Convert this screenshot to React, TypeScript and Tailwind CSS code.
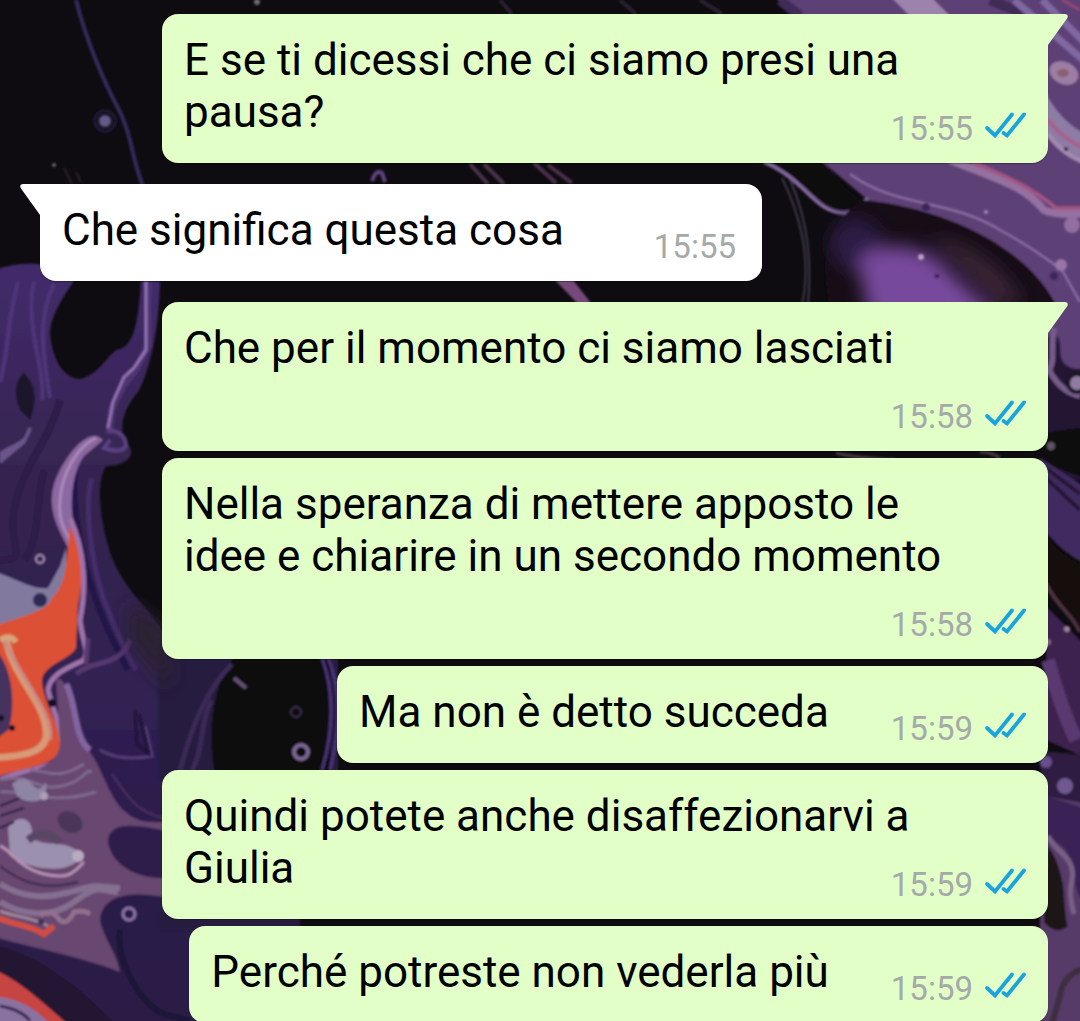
import clsx from 'clsx';

type Message = {
  id: number;
  text: string;
  time: string;
  mine: boolean;
  first?: boolean;
};

const messages: Message[] = [
  { id: 1, text: 'E se ti dicessi che ci siamo presi una pausa?', time: '15:55', mine: true, first: true },
  { id: 2, text: 'Che significa questa cosa', time: '15:55', mine: false, first: true },
  { id: 3, text: 'Che per il momento ci siamo lasciati', time: '15:58', mine: true, first: true },
  { id: 4, text: 'Nella speranza di mettere apposto le\nidee e chiarire in un secondo momento', time: '15:58', mine: true },
  { id: 5, text: 'Ma non è detto succeda', time: '15:59', mine: true },
  { id: 6, text: 'Quindi potete anche disaffezionarvi a Giulia', time: '15:59', mine: true },
  { id: 7, text: 'Perché potreste non vederla più', time: '15:59', mine: true },
];

function Wallpaper() {
  return (
    <svg
      className="absolute inset-0 h-full w-full"
      viewBox="0 0 1080 1021"
      preserveAspectRatio="xMidYMid slice"
      fill="none"
      aria-hidden="true"
    >
      <defs>
        <filter id="soft" x="-20%" y="-20%" width="140%" height="140%">
          <feGaussianBlur stdDeviation="1.3" />
        </filter>
        <filter id="smoke" x="-50%" y="-50%" width="200%" height="200%">
          <feGaussianBlur stdDeviation="9" />
        </filter>
        <linearGradient id="left" x1="0" y1="260" x2="0" y2="1021" gradientUnits="userSpaceOnUse">
          <stop offset="0" stopColor="#432b6c" />
          <stop offset=".3" stopColor="#35244f" />
          <stop offset=".6" stopColor="#302052" />
          <stop offset="1" stopColor="#2a1b45" />
        </linearGradient>
      </defs>
      <rect width="1080" height="1021" fill="#0e0c10" />

      {/* top left */}
      <g filter="url(#soft)">
        <path d="M76 0C86 40 104 82 118 108S132 160 143 186" stroke="#352b5c" strokeWidth="4" />
        <circle cx="105" cy="121" r="6" fill="#625a8b" />
        <circle cx="105" cy="121" r="10" stroke="#1d1730" strokeWidth="4" />
        <circle cx="54" cy="165" r="2" fill="#666" />
        <path d="M64 168l8 16M76 172l5 10" stroke="#2c2228" strokeWidth="2" />
        <circle cx="257" cy="2" r="3" fill="#6f6b74" />
        <path d="M372 181q4-12 10-8l3 9" stroke="#604585" strokeWidth="4" />
        <path d="M470 164l18 20M484 164l20 20M534 163l22 20M548 165l24 18" stroke="#4c304d" strokeWidth="4" />
        <path d="M555 280l22 23h14l-18-23z" fill="#764a7c" />
        <path d="M500 0l12 14M620 0l16 14M700 0l22 14" stroke="#2b2030" strokeWidth="4" />
      </g>

      {/* left column of paint */}
      <g filter="url(#soft)">
        <path
          d="M-10 272C20 258 62 262 74 281C62 298 50 318 50 334C53 362 64 378 80 379C99 374 104 360 116 350C132 348 138 330 141 281H160C159 330 150 370 138 392C124 408 116 430 128 444C138 458 122 466 106 466C94 485 102 530 112 558C125 590 150 610 163 632H200V1040H-10Z"
          fill="url(#left)"
        />
        <path d="M18 282C6 325 10 345 0 382M34 282C24 325 46 370 42 400M54 284C36 320 44 360 50 398" stroke="#4f3679" strokeWidth="4" />
        <path d="M24 372q-14 14-4 38l10 10q8-20 2-36z" fill="#1a122b" />
        <path d="M0 454C12 444 26 446 30 428L24 442Q12 452 0 462" fill="#6a578c" stroke="#6a578c" strokeWidth="3" />
        <path d="M60 400C50 440 20 470 14 510S30 560 0 560M44 470C36 500 40 540 24 560" stroke="#2d1f49" strokeWidth="8" />
        <path d="M148 281V346L136 369L124 384L112 408L109 434" stroke="#563c7c" strokeWidth="7" opacity=".7" />
        <path d="M146 281V350L134 368L124 377L113 402L108 428" stroke="#9a78b8" strokeWidth="2.5" />
        <path d="M108 430Q126 432 126 446Q122 454 104 448L110 440" stroke="#5b4182" strokeWidth="4" />
        <path d="M84 446C68 468 76 520 82 550S100 620 128 670" stroke="#23154a" strokeWidth="6" />
        <path d="M92 478C84 500 90 560 104 600C116 630 124 650 136 670" stroke="#452d6b" strokeWidth="5" />
        <path d="M103 440C88 424 62 460 54 484C47 510 58 528 68 548L78 545C68 515 70 475 84 456Z" fill="#8a68a0" />
        <path d="M96 438C78 446 62 472 60 500S68 530 72 548" stroke="#ab89b9" strokeWidth="3" />

        <path d="M-10 570C20 580 32 590 48 588L60 566L66 548L68 600L40 615L-10 628Z" fill="#81799e" />
        <path
          d="M70 526C82 548 85 570 78 605L76 648C70 660 44 664 42 680C42 700 62 730 62 746C56 770 18 766 -10 780V628C20 616 48 612 52 598C68 582 66 560 70 526Z"
          fill="#dc5134"
        />
        <path d="M70 518C86 552 86 590 80 620C82 642 90 650 84 660C68 668 50 674 48 690C52 710 66 735 62 754C58 770 16 770 0 780" stroke="#9f73aa" strokeWidth="5" />
        <path d="M-10 646C14 660 16 710 8 730L-10 744Z" fill="#45325f" />
        <path d="M6 640C14 680 50 706 46 738C42 754 20 756 -6 758" stroke="#d89a77" strokeWidth="7" />
        <path d="M4 640C22 680 56 716 50 740" stroke="#c7898a" strokeWidth="3" />
        <path d="M0 640q10-6 16 2" stroke="#d6a57a" strokeWidth="6" />
        <circle cx="40" cy="600" r="7" fill="#2d2a55" />
        <circle cx="40" cy="559" r="4" stroke="#a48eaf" strokeWidth="2" />
        <circle cx="52" cy="703" r="4" fill="#180f27" />
        <circle cx="12" cy="728" r="3" fill="#180f27" />
        <circle cx="1" cy="718" r="3" fill="#180f27" />

        <path
          d="M56 680C68 672 74 720 88 750C102 765 108 800 128 814C142 824 150 822 170 822V832C138 824 108 820 108 842C112 866 138 880 170 878V898C130 890 102 895 100 920C104 940 116 950 120 972C84 958 42 950 -10 936V782C30 774 62 766 60 740Z"
          fill="#67476f"
        />
        <path d="M66 684C76 700 74 740 90 750" stroke="#8265a0" strokeWidth="6" />
        <path d="M100 750Q120 762 152 756L145 726" stroke="#523d73" strokeWidth="3" />
        <path d="M76 674C90 660 120 668 130 640M86 664l2-26" stroke="#56396f" strokeWidth="5" />
        <path d="M112 774C132 804 140 812 163 818" stroke="#49325f" strokeWidth="2" />

        {/* pale swirls */}
        <path d="M0 780C30 772 36 792 62 786S84 768 92 772M0 792C30 790 50 806 96 792M30 770C52 772 58 780 84 764" stroke="#80698d" strokeWidth="3" />
        <path d="M12 784q12-10 20 0t14-2q2 14-6 18t-22-2z" fill="#8e84a3" />
        <path d="M8 828C18 812 34 818 32 836C40 850 68 836 82 856C70 876 30 870 10 856Z" fill="#9b90ae" />
        <path d="M28 840Q44 828 60 842" stroke="#594662" strokeWidth="8" />
        <ellipse cx="70" cy="822" rx="13" ry="10" fill="#4c3659" transform="rotate(30 70 822)" />
        <circle cx="78" cy="856" r="6" fill="#b8aac2" />
        <circle cx="44" cy="796" r="4" fill="#ae9fb8" />
        <path d="M0 806l20-8M0 816l24-8M0 828l14-6" stroke="#2b1d40" strokeWidth="2" />
        <path d="M0 846C12 850 18 868 44 874S74 872 84 862" stroke="#b590b2" strokeWidth="3" />
        <path d="M0 866C18 880 40 892 78 882" stroke="#392647" strokeWidth="2" />
        <path d="M0 884C20 896 40 900 70 892S92 886 120 888M0 902C20 914 50 920 74 902S98 890 118 892" stroke="#857091" strokeWidth="6" />
        <path d="M40 916q10-8 18 2t16-6q10-2 16 2" stroke="#93708f" strokeWidth="5" />
        <path d="M-4 917C16 926 28 924 44 934L54 926" stroke="#d34e42" strokeWidth="6" />
        <path d="M0 911C18 918 30 916 48 926" stroke="#a28799" strokeWidth="3" />
        <circle cx="129" cy="914" r="6" stroke="#8b74a7" strokeWidth="3" />
        <circle cx="41" cy="922" r="3" fill="#403052" />

        {/* bottom edge */}
        <path d="M-10 944C32 952 76 980 130 1040H60L-10 980Z" fill="#211333" />
        <path d="M-10 968C20 980 40 1000 80 1035H48L-10 995Z" fill="#c64542" />
        <path d="M-10 996C24 998 40 1012 60 1035H-10Z" fill="#8a72a0" />
        <path d="M0 1006Q22 1010 30 1021" stroke="#33234b" strokeWidth="3" />
        <path d="M120 930C116 956 134 990 150 1005S176 1014 189 1021" stroke="#1f1238" strokeWidth="6" />
      </g>

      {/* middle strip between the bubbles */}
      <g filter="url(#soft)">
        <path d="M158 640H338V780H158Z" fill="#261a40" />
        <path d="M216 780C206 730 212 680 240 650H330V780Z" fill="#0d0a10" />
        <path d="M180 770C192 726 206 690 232 664M192 770C204 750 200 720 212 700" stroke="#3b2a55" strokeWidth="5" />
        <path d="M322 658C334 690 334 730 322 770M328 658C342 690 340 730 330 770" stroke="#4c367a" strokeWidth="3" />
        <path d="M234 678l12 10" stroke="#655377" strokeWidth="4" />
        <circle cx="301" cy="752" r="7" stroke="#7b6894" strokeWidth="4" />
        <circle cx="296" cy="712" r="5" stroke="#3b2f4a" strokeWidth="2" />
        <path d="M139 714l10 40-12-10-2-34" stroke="#19102e" strokeWidth="2" />
        <path d="M158 910H300V930H158Z" fill="#281a41" />
      </g>
      <g filter="url(#smoke)">
        <path d="M130 600L170 630V690L128 640Z" fill="#2c2232" />
      </g>

      {/* top right */}
      <g filter="url(#soft)">
        <path d="M770 -10H1100V470L1045 440V330L1030 302C1010 260 966 224 868 200L820 160L870 140L790 14Z" fill="#5d4076" />
        <path d="M780 0l20 16M990 0l40 16" stroke="#3f2956" strokeWidth="10" />
        <path d="M890 -4L910 16H950L930 -4Z" fill="#9b83ac" />
        <path d="M1014 0L1090 66M1042 0L1090 48" stroke="#8067a0" strokeWidth="7" />
        <path d="M1062 0L1080 10" stroke="#95466f" strokeWidth="3" />
        <ellipse cx="1064" cy="73" rx="15" ry="11" fill="#9e7da4" transform="rotate(25 1064 73)" />
        <ellipse cx="1063" cy="73" rx="6" ry="4" fill="#8a606f" />
        <path d="M1046 94C1056 112 1070 128 1090 136V162C1064 154 1052 142 1046 136Z" fill="#8d7ca4" />
        <path d="M1048 120Q1064 140 1084 148" stroke="#a7618a" strokeWidth="4" />
        <path d="M1048 134Q1062 154 1084 162" stroke="#a58bb0" strokeWidth="4" />
        <circle cx="1066" cy="149" r="2" fill="#2b162e" />

        <path d="M820 160C838 176 848 198 868 200C850 216 834 214 800 184L764 160Z" fill="#100a10" />
        <path d="M764 162C806 180 814 212 844 213C858 212 862 204 868 198" stroke="#80669c" strokeWidth="4" />
        <path d="M782 178C800 214 812 260 802 304M790 180C808 220 812 260 808 304" stroke="#3f3748" strokeWidth="2" />
        <path d="M862 200C950 208 1034 252 1058 310H830C822 260 820 230 862 200Z" fill="#171019" />
      </g>
      <g filter="url(#smoke)">
        <ellipse cx="856" cy="244" rx="26" ry="26" fill="#2a1d45" />
        <path d="M858 262C880 236 926 246 944 266S990 306 1000 320H870Z" fill="#774a9c" />
        <path d="M930 236C960 240 1000 262 1024 304H1000Z" fill="#3c2838" />
      </g>
      <g filter="url(#soft)">
        <path d="M950 160C1000 180 1024 186 1044 210Q1056 216 1090 213" stroke="#9471a0" strokeWidth="8" />
        <path d="M972 162C1012 178 1034 190 1056 208H1090" stroke="#a25582" strokeWidth="4" />
        <circle cx="1072" cy="225" r="8" fill="#936ea0" />
        <path d="M850 174C896 208 948 198 1000 230C1030 246 1054 264 1062 270L1080 302" stroke="#8a6da0" strokeWidth="2.5" />
        <circle cx="1061" cy="265" r="6" fill="#9876aa" />
        <circle cx="926" cy="207" r="4" fill="#39265c" />
        <circle cx="1054" cy="276" r="4" fill="#3c255a" />
        <circle cx="921" cy="257" r="3" fill="#bda0c5" />
        <circle cx="986" cy="212" r="2" fill="#a88bb2" />
        <circle cx="937" cy="276" r="2" fill="#35214c" />
      </g>

      {/* right edge */}
      <g filter="url(#soft)">
        <path d="M1044 340Q1060 326 1060 350T1090 368V480H1036Z" fill="#241632" />
        <path d="M1048 368Q1060 392 1080 396M1054 328C1050 350 1056 360 1048 372" stroke="#765b89" strokeWidth="6" />
        <circle cx="1077" cy="383" r="9" fill="#907ca2" stroke="#1d1227" strokeWidth="4" />
        <path d="M1036 434L1090 426V480L1036 460Z" fill="#100d10" />
        <circle cx="1051" cy="446" r="4" fill="#5d5560" />
        <path d="M1040 458L1090 490V566C1060 552 1052 538 1040 526Z" fill="#412b61" />
        <path d="M1046 468L1080 494M1046 478L1080 510" stroke="#251635" strokeWidth="4" />
        <path d="M1046 536Q1060 556 1090 570V634L1046 590Z" fill="#12100f" />
        <path d="M1046 584C1058 608 1072 614 1080 632" stroke="#4d3240" strokeWidth="4" />
        <path d="M1046 606L1090 650V760L1046 740Z" fill="#3c2450" />
        <path d="M1048 660Q1060 706 1076 740" stroke="#5a3970" strokeWidth="14" />
        <circle cx="1067" cy="629" r="3" fill="#9d829f" />
        <circle cx="1048" cy="642" r="3" fill="#806481" />
        <path d="M1036 750L1090 756V810H1050Z" fill="#2d1b42" />
        <circle cx="1046" cy="762" r="6" fill="#68508b" />
        <circle cx="1065" cy="786" r="8" fill="#6f588f" />
        <path d="M1044 796L1090 804V1040H1036Z" fill="#563b68" />
        <path d="M1046 796L1090 810V910C1068 890 1076 860 1064 848L1046 834Z" fill="#3b2457" />
        <path d="M1048 846Q1062 866 1064 896T1068 926Q1056 936 1044 922Z" fill="#1b1216" />
        <path d="M1048 836C1056 854 1076 856 1072 880Q1068 894 1074 914" stroke="#786085" strokeWidth="5" />
        <path d="M1084 968Q1062 976 1060 996L1050 1030" stroke="#3d2d41" strokeWidth="6" />
        <path d="M836 453q20 5 60 7M980 452q12 0 20 6" stroke="#4b3944" strokeWidth="3" />
      </g>
    </svg>
  );
}

function Tail({ mine }: { mine: boolean }) {
  return (
    <svg
      className={clsx('absolute top-0 h-8 w-6', mine ? 'left-full -ml-1 text-[#e1ffc7]' : 'right-full -mr-1 -scale-x-100 text-white')}
      viewBox="0 0 24 32"
      aria-hidden="true"
    >
      <path d="M0 0H21C23.8 0 24.6 2.4 23 4.6L4 31H0Z" fill="currentColor" />
    </svg>
  );
}

function ReadTicks() {
  return (
    <svg className="h-9 w-[42px]" viewBox="0 0 42 36" fill="none" stroke="#1ba3dd" strokeWidth="3.8" strokeLinecap="round" role="img" aria-label="Letto">
      <path strokeLinejoin="miter" d="M3 17L11 24.5L28 3.5" />
      <path d="M19.5 22L23 24.5L40 3.5" />
    </svg>
  );
}

function Bubble({ message }: { message: Message }) {
  const { text, time, mine, first } = message;

  return (
    <article
      className={clsx(
        'relative flow-root w-fit rounded-2xl px-[22px] pt-5 pb-[25px] shadow-[0_1px_1px_rgba(0,0,0,0.3)]',
        mine ? 'ml-[122px] self-end bg-[#e1ffc7]' : 'mr-[122px] self-start bg-white',
        first && mine && 'rounded-tr-none',
        first && !mine && 'rounded-tl-none',
      )}
    >
      {first && <Tail mine={mine} />}
      <span className="whitespace-pre-line">{text}</span>
      <span
        className={clsx(
          'float-right mt-[23px] -mb-[11px] flex items-center gap-[11px] text-[33px] leading-10 text-[#a5aaa8]',
          mine ? 'ml-[62px]' : 'mr-1 ml-[90px]',
        )}
      >
        <time>{time}</time>
        {mine && <ReadTicks />}
      </span>
    </article>
  );
}

export default function App() {
  return (
    <main className="relative h-screen overflow-hidden bg-[#0e0c10] font-[Roboto,sans-serif]">
      <Wallpaper />
      <ul className="relative flex flex-col pt-[14px] pr-8 pl-10 text-[44px] leading-[52px] text-black">
        {messages.map((message, i) => (
          <li key={message.id} className={clsx('flex flex-col', i > 0 && (message.first ? 'mt-[21px]' : 'mt-[7px]'))}>
            <Bubble message={message} />
          </li>
        ))}
      </ul>
    </main>
  );
}
